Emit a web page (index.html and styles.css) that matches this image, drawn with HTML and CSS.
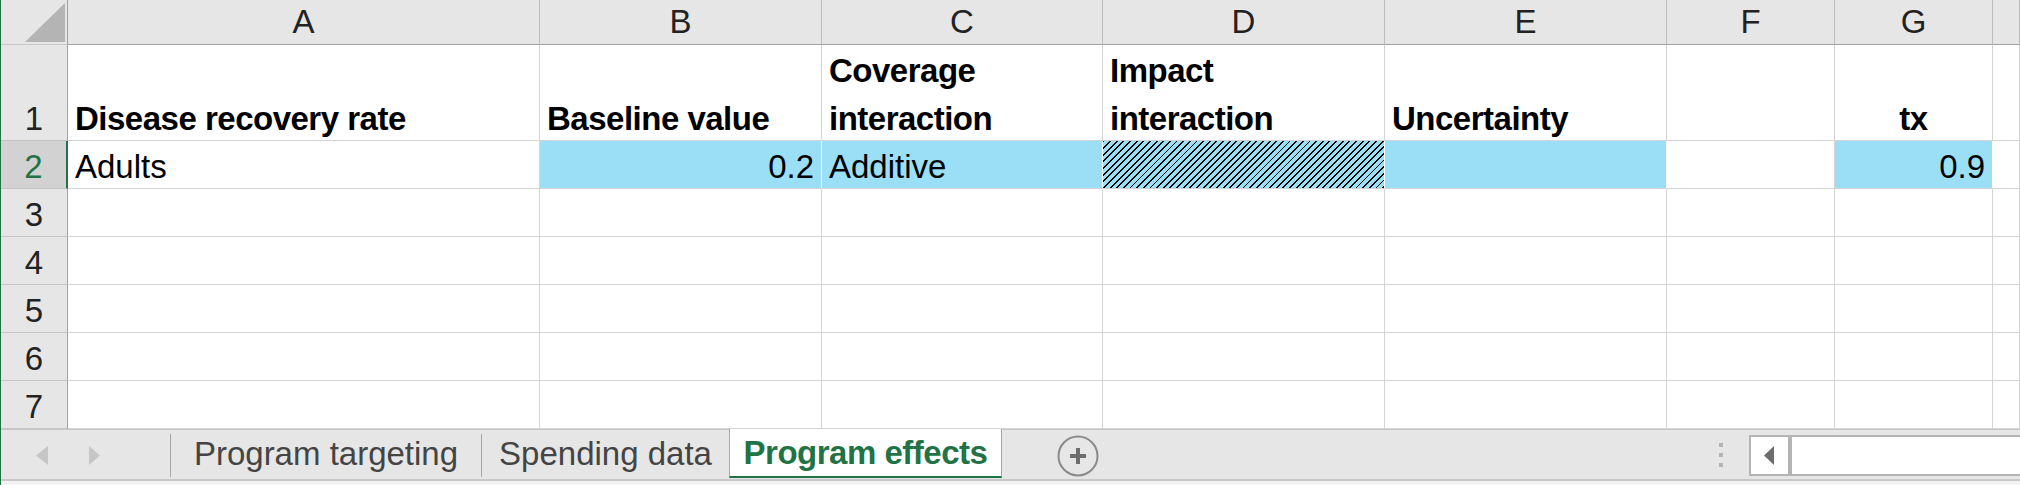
FILE: index.html
```html
<!DOCTYPE html>
<html>
<head>
<meta charset="utf-8">
<link rel="stylesheet" href="styles.css">
</head>
<body>
<div class="app">
  <div class="grid">
    <div class="corner"><svg width="67" height="44" viewBox="1 0 67 44"><polygon points="25,42 65,42 65,3" fill="#b4b4b4"/></svg></div>
    <div class="ch">A</div><div class="ch">B</div><div class="ch">C</div><div class="ch">D</div><div class="ch">E</div><div class="ch">F</div><div class="ch">G</div><div class="ch"></div>

    <div class="rh"><span>1</span></div>
    <div class="c b"><span>Disease recovery rate</span></div>
    <div class="c b"><span>Baseline value</span></div>
    <div class="c b"><span>Coverage<br>interaction</span></div>
    <div class="c b"><span>Impact<br>interaction</span></div>
    <div class="c b"><span>Uncertainty</span></div>
    <div class="c"></div>
    <div class="c b mid"><span>tx</span></div>
    <div class="c"></div>

    <div class="rh sel"><span>2</span></div>
    <div class="c"><span>Adults</span></div>
    <div class="c fill num"><span>0.2</span></div>
    <div class="c fill"><span>Additive</span></div>
    <div class="c fill hatch"></div>
    <div class="c fill"></div>
    <div class="c"></div>
    <div class="c fill num"><span>0.9</span></div>
    <div class="c"></div>

    <div class="rh"><span>3</span></div>
    <div class="c"></div><div class="c"></div><div class="c"></div><div class="c"></div><div class="c"></div><div class="c"></div><div class="c"></div><div class="c"></div>
    <div class="rh"><span>4</span></div>
    <div class="c"></div><div class="c"></div><div class="c"></div><div class="c"></div><div class="c"></div><div class="c"></div><div class="c"></div><div class="c"></div>
    <div class="rh"><span>5</span></div>
    <div class="c"></div><div class="c"></div><div class="c"></div><div class="c"></div><div class="c"></div><div class="c"></div><div class="c"></div><div class="c"></div>
    <div class="rh"><span>6</span></div>
    <div class="c"></div><div class="c"></div><div class="c"></div><div class="c"></div><div class="c"></div><div class="c"></div><div class="c"></div><div class="c"></div>
    <div class="rh"><span>7</span></div>
    <div class="c"></div><div class="c"></div><div class="c"></div><div class="c"></div><div class="c"></div><div class="c"></div><div class="c"></div><div class="c"></div>
  </div>

  <div class="tabbar">
    <div class="nav">
      <svg width="169" height="49" viewBox="0 0 169 49">
        <polygon points="35,25.5 47,16 47,35" fill="#c6c6c6"/>
        <polygon points="88,16 88,35 99,25.5" fill="#c6c6c6"/>
      </svg>
    </div>
    <div class="sep"></div>
    <div class="tab t1">Program targeting</div>
    <div class="sep"></div>
    <div class="tab t2">Spending data</div>
    <div class="tab active">Program effects</div>
    <div class="add">
      <svg width="42" height="42" viewBox="0 0 42 42">
        <circle cx="21" cy="21" r="19.5" fill="none" stroke="#8a8a8a" stroke-width="2"/>
        <rect x="13" y="19" width="16" height="4" fill="#6d6d6d"/>
        <rect x="19" y="13" width="4" height="16" fill="#6d6d6d"/>
      </svg>
    </div>
    <div class="hscroll">
      <div class="dots">
        <svg width="4" height="25" viewBox="0 0 4 25">
          <rect x="0" y="0" width="4" height="4" fill="#b4b4b4"/>
          <rect x="0" y="10" width="4" height="4" fill="#b4b4b4"/>
          <rect x="0" y="20" width="4" height="4" fill="#b4b4b4"/>
        </svg>
      </div>
      <div class="sbtn">
        <svg width="37" height="37" viewBox="0 0 37 37">
          <polygon points="13,18.5 23,9 23,28" fill="#6d6d6d"/>
        </svg>
      </div>
      <div class="track"></div>
    </div>
  </div>
  <div class="strip"></div>
</div>
</body>
</html>
```

FILE: styles.css
```css
* {
  box-sizing: border-box;
  margin: 0;
  padding: 0;
}

html, body {
  width: 2020px;
  height: 485px;
  overflow: hidden;
  background: #ffffff;
}

body {
  font-family: "Liberation Sans", Arial, sans-serif;
  font-size: 33px;
  color: #000;
}

.app {
  height: 485px;
  border-left: 1px solid #217346;
  display: flex;
  flex-direction: column;
}

.grid {
  display: grid;
  grid-template-columns: 67px 472px 282px 281px 282px 282px 168px 158px 1fr;
  grid-template-rows: 45px 96px repeat(6, 48px);
  flex: none;
}

.corner {
  background: #e6e6e6;
  border-right: 1px solid #a0a0a0;
  border-bottom: 1px solid #c8c8c8;
}

.corner svg {
  display: block;
}

.ch {
  background: #e6e6e6;
  border-right: 1px solid #bcbcbc;
  border-bottom: 1px solid #a0a0a0;
  text-align: center;
  line-height: 44px;
  color: #222;
}

.rh {
  background: #e6e6e6;
  border-right: 1px solid #a0a0a0;
  border-bottom: 1px solid #c4c4c4;
  display: flex;
  align-items: flex-end;
  justify-content: center;
  color: #222;
}

.rh span,
.c span {
  line-height: 48px;
  margin-bottom: -3px;
  white-space: nowrap;
}

.rh.sel {
  background: #d2d2d2;
  color: #217346;
  border-right: 2px solid #217346;
}

.c {
  border-right: 1px solid #d4d4d4;
  border-bottom: 1px solid #d4d4d4;
  padding: 0 7px;
  display: flex;
  align-items: flex-end;
  overflow: hidden;
}

.c.b {
  font-weight: 700;
  letter-spacing: -0.5px;
}

.c.mid {
  justify-content: center;
}

.c.num {
  justify-content: flex-end;
}

.c.fill {
  background: #9bdff7;
  border-right-color: #ffffff;
}

.c.hatch {
  background: repeating-linear-gradient(135deg, #000 0 1.3px, #9bdff7 1.3px 4.7px);
}

.tabbar {
  height: 52px;
  flex: none;
  background: #e6e6e6;
  border-top: 1px solid #c6c6c6;
  border-bottom: 2px solid #c8c8c8;
  display: flex;
  align-items: flex-start;
}

.nav {
  width: 169px;
  height: 49px;
  flex: none;
}

.nav svg {
  display: block;
}

.sep {
  width: 1px;
  height: 43px;
  margin-top: 4px;
  background: #a6a6a6;
  flex: none;
}

.tab {
  height: 48px;
  line-height: 48px;
  text-align: center;
  color: #444;
  white-space: nowrap;
  flex: none;
}

.t1 {
  width: 310px;
}

.t2 {
  width: 247px;
}

.tab.active {
  width: 273px;
  background: #ffffff;
  border-left: 1px solid #a6a6a6;
  border-right: 1px solid #a6a6a6;
  border-bottom: 2px solid #217346;
  color: #217346;
  font-weight: 700;
  letter-spacing: -0.5px;
  line-height: 46px;
  margin-top: -1px;
  height: 49px;
  padding-top: 1px;
}

.add {
  margin-left: 55px;
  margin-top: 5px;
  flex: none;
}

.add svg {
  display: block;
}

.hscroll {
  margin-left: auto;
  display: flex;
  align-items: flex-start;
  flex: none;
}

.dots {
  width: 4px;
  margin-top: 13px;
  margin-right: 26px;
}

.dots svg {
  display: block;
}

.sbtn {
  width: 43px;
  height: 41px;
  margin-top: 5px;
  background: #ffffff;
  border: 2px solid #b4b4b4;
  border-right-width: 4px;
}

.sbtn svg {
  display: block;
}

.track {
  width: 228px;
  height: 41px;
  margin-top: 5px;
  background: #ffffff;
  border-top: 2px solid #b4b4b4;
  border-bottom: 2px solid #b4b4b4;
}

.strip {
  height: 4px;
  flex: none;
  background: #f3f3f3;
}
```
